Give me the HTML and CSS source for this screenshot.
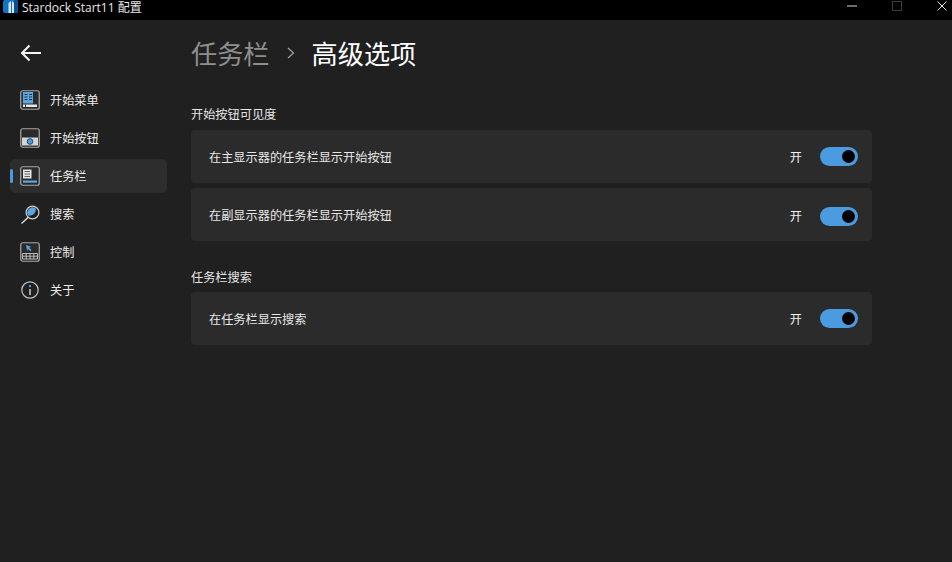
FILE: index.html
```html
<!DOCTYPE html>
<html lang="zh-CN">
<head>
<meta charset="utf-8">
<title>Stardock Start11 配置</title>
<link rel="stylesheet" href="styles.css">
</head>
<body>
<header class="titlebar">
  <div class="title-left">
    <svg class="app-logo" width="15" height="13" viewBox="0 0 15 13"><rect width="15" height="13" rx="2" fill="#1272c4"/><rect x="11" width="4" height="13" rx="1" fill="#0a4f96"/><path d="M5.500 13V3L8 1v12zM9 1l2 2v10H9z" fill="#d5e8f7"/></svg>
    <span class="app-title">Stardock Start11 配置</span>
  </div>
  <div class="window-controls">
    <svg class="ctl-min" width="10" height="2" viewBox="0 0 10 2"><path d="M0 1h10" stroke="#d8d8d8" stroke-width="1"/></svg>
    <svg width="10" height="10" viewBox="0 0 10 10"><rect x=".5" y=".5" width="9" height="9" fill="none" stroke="#3c3c3c"/></svg>
    <svg width="10" height="10" viewBox="0 0 10 10"><path d="M.5.5l9 9M9.500.5l-9 9" stroke="#e8e8e8" stroke-width="1"/></svg>
  </div>
</header>
<div class="shell">
  <nav class="sidebar">
    <svg class="back" width="22" height="18" viewBox="0 0 22 18"><path d="M21 9H2M9.500 1.500L2 9l7.500 7.500" fill="none" stroke="#f4f4f4" stroke-width="2"/></svg>
    <ul class="nav-list">
      <li class="nav-item">
        <svg class="nav-icon" width="20" height="20" viewBox="0 0 20 20"><rect x=".75" y=".75" width="18.500" height="18.500" rx="2" fill="#2a2a2a" stroke="#a8a8a8" stroke-width="1.200"/><rect x="3" y="2" width="10" height="11.500" fill="#5aa6e2"/><path d="M4.500 4.500h3M9 4.500h3M4.500 7h3M9 7h3M4.500 9.500h3M9 9.500h3" stroke="#16344f" stroke-width="1"/><rect x="3" y="14.500" width="14" height="2.500" fill="#e6e6e6"/><rect x="5" y="14.500" width="1" height="2.500" fill="#2a2a2a"/></svg>
        <span>开始菜单</span>
      </li>
      <li class="nav-item">
        <svg class="nav-icon" width="20" height="20" viewBox="0 0 20 20"><rect x=".75" y=".75" width="18.500" height="18.500" rx="2" fill="#2a2a2a" stroke="#a8a8a8" stroke-width="1.200"/><rect x="2" y="9.500" width="16" height="8" fill="#d4d4d4"/><circle cx="10" cy="13.500" r="2.800" fill="#4f9ad8" stroke="#1d4a70" stroke-width="1"/></svg>
        <span>开始按钮</span>
      </li>
      <li class="nav-item active">
        <svg class="nav-icon" width="20" height="20" viewBox="0 0 20 20"><rect x=".75" y=".75" width="18.500" height="18.500" rx="2" fill="#2a2a2a" stroke="#a8a8a8" stroke-width="1.200"/><rect x="3" y="3.500" width="8.500" height="9" fill="#e4e4e4"/><path d="M4.500 5.500h5.500M4.500 8h5.500M4.500 10.500h5.500" stroke="#555" stroke-width=".9"/><rect x="3" y="14.500" width="14" height="2.200" fill="#5aa6e2"/></svg>
        <span>任务栏</span>
      </li>
      <li class="nav-item">
        <svg class="nav-icon" width="20" height="20" viewBox="0 0 20 20"><circle cx="12.500" cy="8.500" r="6.400" fill="#1e1e1e" stroke="#cfcfcf" stroke-width="1.200"/><path d="M8 11.500A5.400 5.400 0 0 1 15.500 4.200C17 8 13 12.500 8 11.500z" fill="#5aa6e2"/><path d="M8 13.500l-6.500 6" stroke="#e6e6e6" stroke-width="1.300"/></svg>
        <span>搜索</span>
      </li>
      <li class="nav-item">
        <svg class="nav-icon" width="20" height="20" viewBox="0 0 20 20"><rect x=".75" y=".75" width="18.500" height="18.500" rx="2" fill="#2a2a2a" stroke="#a8a8a8" stroke-width="1.200"/><path d="M6 3l5 1.800-1.800 1 2.300 2.200-1.200 1.200-2.200-2.300-1 1.800z" fill="#5aa6e2"/><path d="M2.500 11.500h15v5.500h-15zM2.500 14.200h15M6.200 11.500v5.500M10 11.500v5.500M13.800 11.500v5.500" fill="none" stroke="#c8c8c8" stroke-width=".9"/></svg>
        <span>控制</span>
      </li>
      <li class="nav-item">
        <svg class="nav-icon" width="20" height="20" viewBox="0 0 20 20"><circle cx="10" cy="10" r="8.200" fill="none" stroke="#c4c4c4" stroke-width="1.200"/><circle cx="10" cy="6.200" r="1.100" fill="#5aa6e2"/><path d="M10 9v6" stroke="#c4c4c4" stroke-width="1.600"/></svg>
        <span>关于</span>
      </li>
    </ul>
  </nav>
  <main class="content">
    <h1 class="crumbs">
      <span class="crumb-parent">任务栏</span>
      <svg class="crumb-sep" width="8" height="12" viewBox="0 0 8 12"><path d="M1 1l5.500 5L1 11" fill="none" stroke="#a0a0a0" stroke-width="1.200"/></svg>
      <span class="crumb-current">高级选项</span>
    </h1>
    <section class="group">
      <h2 class="group-title">开始按钮可见度</h2>
      <div class="card">
        <span>在主显示器的任务栏显示开始按钮</span>
        <div class="toggle-wrap"><span class="state">开</span><span class="toggle"><span class="knob"></span></span></div>
      </div>
      <div class="card">
        <span>在副显示器的任务栏显示开始按钮</span>
        <div class="toggle-wrap low"><span class="state">开</span><span class="toggle"><span class="knob"></span></span></div>
      </div>
    </section>
    <section class="group">
      <h2 class="group-title">任务栏搜索</h2>
      <div class="card">
        <span>在任务栏显示搜索</span>
        <div class="toggle-wrap"><span class="state">开</span><span class="toggle"><span class="knob"></span></span></div>
      </div>
    </section>
  </main>
</div>
</body>
</html>
```
FILE: styles.css
```css
* { box-sizing: border-box; }
html, body { height: 100%; }
body {
  margin: 0;
  background: #202020;
  color: #f0f0f0;
  font-family: "Noto Sans CJK SC", "Open Sans", sans-serif;
  font-size: 12.200px;
  overflow: hidden;
}
.titlebar {
  height: 20px;
  background: #000;
  display: flex;
  justify-content: space-between;
  align-items: flex-start;
}
.title-left { display: flex; align-items: flex-start; gap: 4px; padding-left: 3px; }
.app-logo { display: block; }
.app-title {
  font-family: "Open Sans", "Noto Sans CJK SC", sans-serif;
  font-size: 12px;
  line-height: 14px;
  padding-top: 1px;
  color: #e8e8e8;
}
.window-controls {
  display: flex;
  align-items: flex-start;
  gap: 35px;
  padding: 1px 5px 0 0;
}
.ctl-min { margin-top: 4px; }
.shell { display: flex; height: 542px; }
.sidebar { width: 191px; padding: 0 24px 0 10px; flex: none; }
.back { display: block; margin: 24px 0 0 10px; }
.nav-list { list-style: none; margin: 21px 0 0; padding: 0; display: flex; flex-direction: column; gap: 4px; }
.nav-item {
  height: 34px;
  display: flex;
  align-items: center;
  gap: 10px;
  padding-left: 10px;
  border-radius: 5px;
  position: relative;
  color: #ececec;
}
.nav-icon { flex: none; display: block; }
.nav-item.active { background: #2d2d2d; }
.nav-item.active::before {
  content: "";
  position: absolute;
  left: 0;
  top: 10px;
  width: 3px;
  height: 14px;
  border-radius: 2px;
  background: #4a9be0;
}
.content { width: 681px; flex: none; }
.crumbs {
  margin: 15px 0 0;
  height: 36px;
  display: flex;
  align-items: center;
  font-weight: 400;
  font-size: 26.200px;
  line-height: 36px;
}
.crumb-parent { color: #8e8e8e; }
.crumb-sep { margin: 0 17px 0 17px; }
.crumb-current { color: #fff; }
.group-title {
  margin: 0;
  padding-top: 35px;
  height: 59px;
  line-height: 16px;
  font-size: 12.200px;
  font-weight: 400;
  color: #e6e6e6;
}
.group + .group .group-title { padding-top: 23px; height: 46px; }
.card {
  height: 53px;
  margin-bottom: 5px;
  background: #2b2b2b;
  border-radius: 4px;
  display: flex;
  justify-content: space-between;
  align-items: center;
  padding: 0 14px 0 18px;
  color: #e8e8e8;
}
.toggle-wrap { display: flex; align-items: center; gap: 18px; }
.toggle-wrap.low { padding-top: 3px; }
.state { color: #f0f0f0; }
.toggle {
  width: 38px;
  height: 19px;
  border-radius: 10px;
  background: #4a9be0;
  display: flex;
  align-items: center;
  justify-content: flex-end;
  padding-right: 3px;
}
.knob { width: 13px; height: 13px; border-radius: 50%; background: #000; }
```
